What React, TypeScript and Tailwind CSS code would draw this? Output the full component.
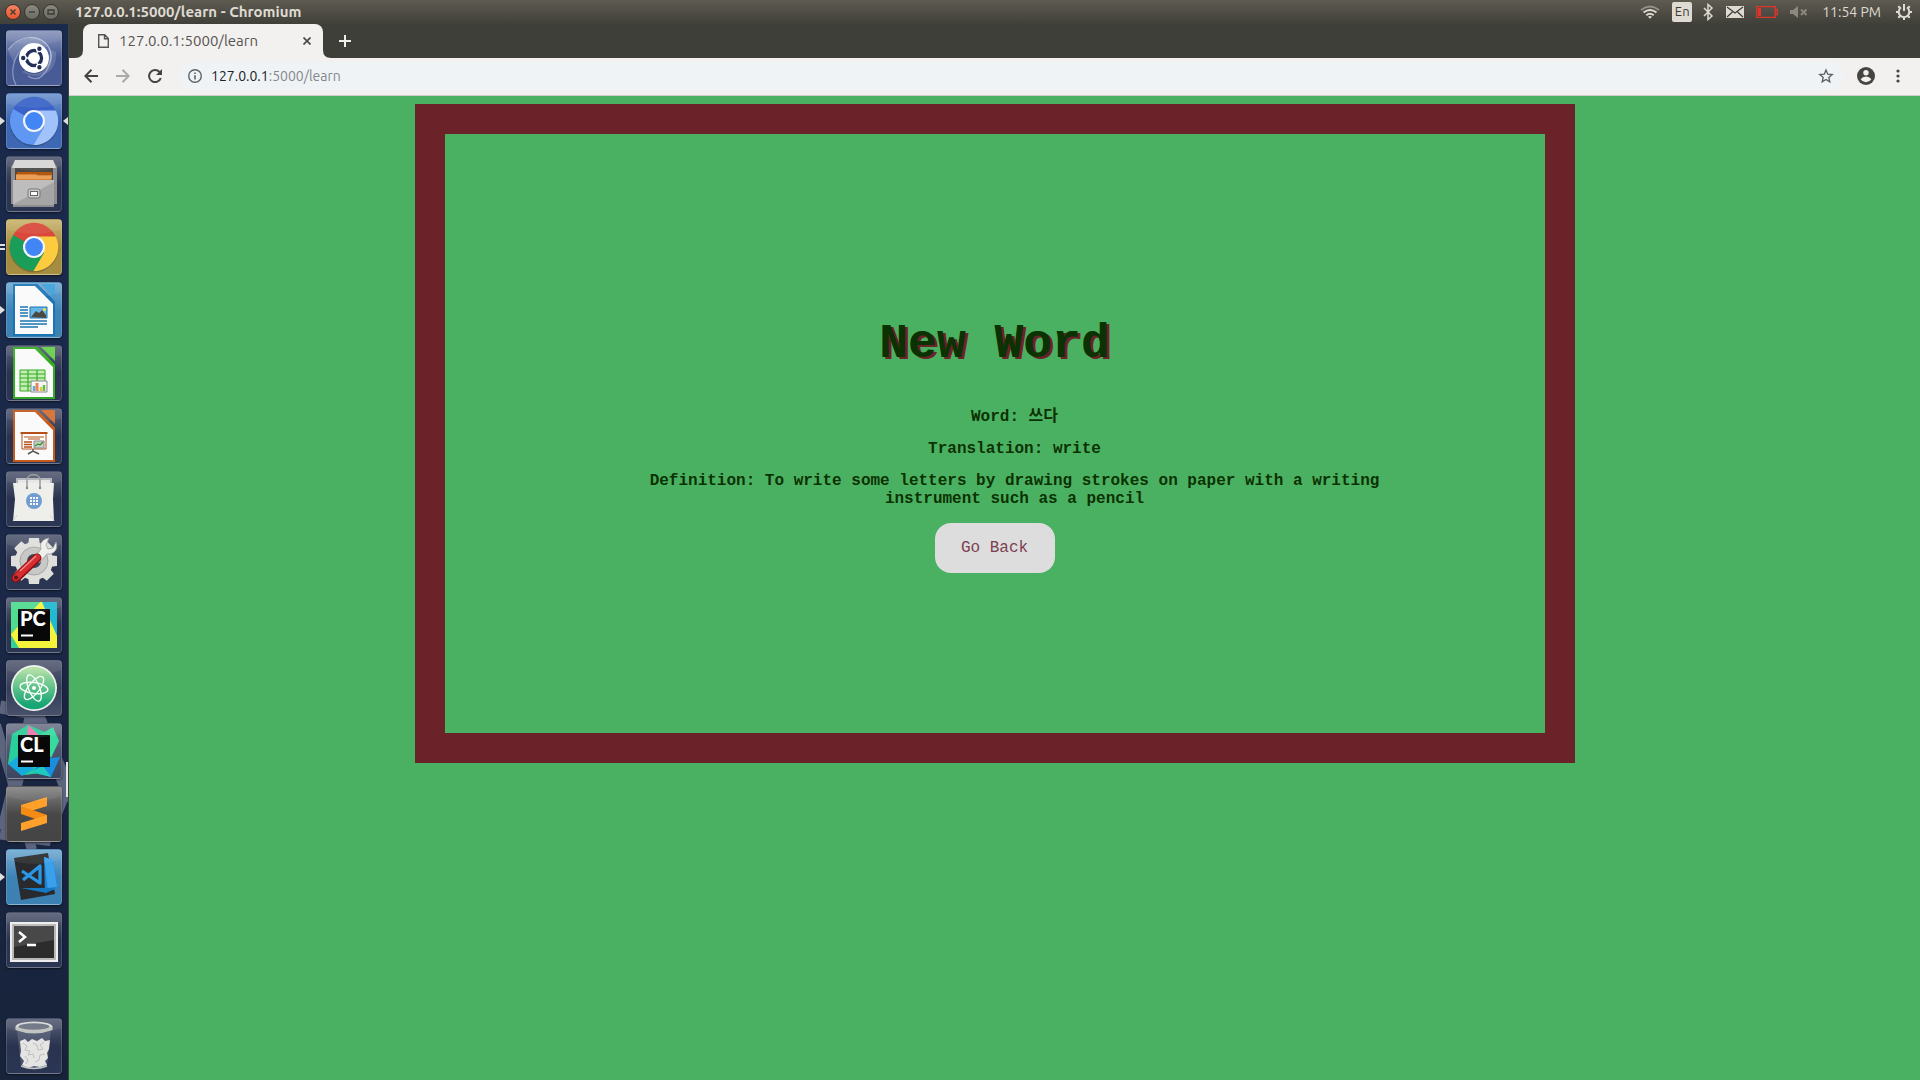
import React from "react";

type AppEntry = {
  name: string;
  tile: string;
  art: React.ReactNode;
  running?: "one" | "two";
  focused?: boolean;
};

const glass = "bg-linear-to-b from-[#5b6278] via-[#29334f] to-[#2b3654]";

function Ubuntu() {
  return (
    <>
      <g fill="none" stroke="#c3cbe8" strokeOpacity=".55" strokeWidth="1.2">
        <path d="M2 20C12 6 32 2 42 16c8 12 0 24-12 26" />
        <path d="M10 55C2 40 10 16 28 14" />
        <path d="M24 8c18-2 30 20 12 38-4 4-10 3-14 0" />
      </g>
      <path d="M2 20C12 6 32 2 42 16l-8 4C24 10 12 16 8 34Z" fill="#fff" opacity=".15" />
      <path d="M50 22c2 20-16 30-34 20l6-4c14 4 22-4 22-18Z" fill="#fff" opacity=".15" />
      <circle cx="28" cy="28.500" r="15.200" fill="#1e2c55" opacity=".5" />
      <circle cx="28" cy="28" r="15" fill="#fff" />
      <circle cx="28" cy="28" r="7.500" fill="none" stroke="#23305a" strokeWidth="3.400" />
      <g stroke="#fff" strokeWidth="1.400">
        <path d="M28 28H16M28 28l6-10.400M28 28l6 10.400" />
        <circle cx="17.200" cy="28" r="2.900" fill="#23305a" />
        <circle cx="33.400" cy="18.700" r="2.900" fill="#23305a" />
        <circle cx="33.400" cy="37.300" r="2.900" fill="#23305a" />
      </g>
      <circle cx="28" cy="28" r="5.600" fill="#fff" />
    </>
  );
}

function Browser({ top, left, right, hub }: { top: string; left: string; right: string; hub: string }) {
  return (
    <>
      <ellipse cx="28" cy="29" rx="24.500" ry="24.500" fill="#000" opacity=".2" />
      <path d="M6.600 17A24 24 0 0 1 49.400 17Q52 22 52 28L28 17 17.600 34Z" fill={top} />
      <path d="M7.200 16A24 24 0 0 0 28 52L38 34 28 28Z" fill={left} />
      <path d="M49.800 17.500A24 24 0 0 1 27.500 52L38 34 32 17.500Z" fill={right} />
      <circle cx="28" cy="28" r="11" fill="#f4f5f8" />
      <circle cx="28" cy="28" r="8.900" fill={hub} />
    </>
  );
}

function Drawer() {
  return (
    <>
      <path d="M9 4h38l4 7v37H5V11Z" fill="#8e8e8e" />
      <path d="M9 4h38l3 8H6Z" fill="#d6d6d6" />
      <path d="M9 12h38v16H9Z" fill="#4a4744" />
      <path d="M11 16h35v10H11Z" fill="#b3560f" />
      <path d="M10 18h20l2 2h13v8H10Z" fill="#dc7d2b" />
      <path d="M10 20h36M10 22h36" stroke="#fbd6a1" strokeWidth=".8" />
      <path d="M7 24h41v27H7Z" fill="#a5a5a5" />
      <path d="M7 24h41v2L8 48H7Z" fill="#bdbdbd" />
      <path d="M7 50h41" stroke="#777" />
      <rect x="22" y="33" width="12" height="9" rx="2" fill="#ccc" stroke="#777" />
      <rect x="24.500" y="35.500" width="7" height="4" fill="#fff" stroke="#666" />
    </>
  );
}

function Sheet({ color, light, children }: { color: string; light: string; children: React.ReactNode }) {
  return (
    <>
      <path d="M8 3h23l17 17v33H8Z" fill="#fafafa" stroke={color} strokeWidth="2" />
      <path d="m30 3 18 18" stroke={color} strokeWidth="3" />
      <path d="M35 2h14v14Z" fill={light} />
      {children}
    </>
  );
}

function Writer() {
  return (
    <Sheet color="#1b75b5" light="#3f9fd9">
      <path d="M14 25h8M14 28h8M14 31h8M14 34h8M14 39h27M14 42h27M14 45h18" stroke="#1b75b5" strokeWidth="1.700" />
      <path d="M24 25h17v11H24Z" fill="#67b6e7" stroke="#1b75b5" />
      <path d="m25 35 5-6 3 2 3-3 4 5v3Z" fill="#4a4a43" />
      <circle cx="38.500" cy="27.500" r="1.500" fill="#f3e23e" />
    </Sheet>
  );
}

function Calc() {
  return (
    <Sheet color="#32ad20" light="#65cf4b">
      <path d="M14 25h25v21H14Z" fill="#c4edb6" stroke="#32ad20" />
      <path d="M14 29h25M14 33h25M14 37h25M14 41h25M22 25v21M31 25v21" stroke="#32ad20" strokeWidth="1.200" />
      <path d="M25 36h16v11H25Z" fill="#f7f7f7" stroke="#8b8b8b" />
      <path d="M28 46v-5" stroke="#62a7d8" strokeWidth="2.500" />
      <path d="M31 46v-8" stroke="#e8855a" strokeWidth="3" />
      <path d="M35 46v-4" stroke="#e8c531" strokeWidth="2.500" />
      <path d="M38 46v-6" stroke="#60bd45" strokeWidth="2.500" />
    </Sheet>
  );
}

function Impress() {
  return (
    <Sheet color="#c45a1c" light="#d56d2d">
      <path d="M16 25h24v16H16Z" fill="#fff" stroke="#b6501b" />
      <path d="M14.500 25h27" stroke="#b6501b" strokeWidth="2" />
      <path d="M18 29h20M22 31h12" stroke="#b6501b" strokeWidth="1.200" />
      <path d="M18 34h8M18 36.500h8M18 39h8" stroke="#b6501b" strokeWidth="1.500" />
      <path d="M28 33h10v7H28Z" fill="#cecece" stroke="#888" />
      <path d="m29 38 3-2 2 1 3-3" fill="none" stroke="#259b21" strokeWidth="1.300" />
      <path d="m22 46 5-3 6 3M27 41v3" fill="none" stroke="#555" strokeWidth="1.500" />
    </Sheet>
  );
}

function Bag() {
  return (
    <>
      <path d="M10 7h36v6H10Z" fill="#aeb3b8" />
      <path d="M12 9h32v3H12Z" fill="#e6e6e3" />
      <path d="M7 12h41l-1 16 1 22H7l2-22Z" fill="#eeeeea" />
      <path d="m7 50 4-6M48 50l-4-6" fill="none" stroke="#d4d4cf" />
      <path d="M21 17V9c0-7 13-7 13 0v8" fill="none" stroke="#999" strokeWidth="1.600" />
      <circle cx="21" cy="17" r="1.200" fill="#888" />
      <circle cx="34" cy="17" r="1.200" fill="#888" />
      <circle cx="28" cy="30" r="8" fill="#709dd0" />
      <path d="M24 27h8M24 30h8M24 33h8" stroke="#fff" strokeWidth="2" strokeDasharray="2 1" />
    </>
  );
}

function Settings() {
  const teeth = [0, 45, 90, 135, 180, 225, 270, 315];
  return (
    <>
      <g fill="#dededb">
        {teeth.map((a) => (
          <path key={a} d="M22 12l1-8h10l1 8Z" transform={`rotate(${a} 28 27)`} />
        ))}
        <circle cx="28" cy="27" r="19" />
      </g>
      <circle cx="28" cy="27" r="14" fill="#c8c8c6" stroke="#a5a5a3" />
      <circle cx="28" cy="27" r="7" fill="#3b4259" />
      <path d="M28 24 35 15c-2-6 2-10 8-11l-3 7 2 4 5-1 3-6c3 8-3 13-9 12L33 29Z" fill="#eeeeeb" stroke="#999" strokeWidth=".8" />
      <path d="m31 24-21 20" stroke="#8c1014" strokeWidth="9" strokeLinecap="round" />
      <path d="m31 23.500-21 20" stroke="#d62e30" strokeWidth="6.500" strokeLinecap="round" />
      <path d="M30 22 14 37" stroke="#f18b87" strokeWidth="1.300" />
      <circle cx="10" cy="43.500" r="2" fill="#5b171c" />
    </>
  );
}

function Label({ text }: { text: string }) {
  return (
    <>
      <path d="M12 12h32v32H12Z" fill="#080808" />
      <path d="M15 38.500h12" stroke="#fff" strokeWidth="2.200" />
      <text x="14" y="29" fill="#fff" fontFamily="Lato, sans-serif" fontSize="20" fontWeight="900">
        {text}
      </text>
    </>
  );
}

function PyCharm() {
  return (
    <>
      <path d="M5 5h46v46H5Z" fill="#36d591" />
      <path d="M5 37 34 5h5l12 33v13H5Z" fill="#f5f43b" />
      <path d="M36 5h15v34Z" fill="#20b9cf" />
      <path d="M5 5h29L5 37Z" fill="#4fdc8e" />
      <path d="m5 38 8 13H5Z" fill="#38cf94" />
      <Label text="PC" />
    </>
  );
}

function Atom() {
  return (
    <>
      <circle cx="28" cy="28" r="23" fill="#f1f4ed" />
      <circle cx="28" cy="28" r="21.300" fill="url(#atomFill)" />
      <g fill="none" stroke="#f7fff8" strokeWidth="1.400">
        <ellipse cx="28" cy="28" rx="5.500" ry="14" transform="rotate(-22 28 28)" />
        <ellipse cx="28" cy="28" rx="5.500" ry="14" transform="rotate(38 28 28)" />
        <ellipse cx="28" cy="28" rx="14" ry="5.500" transform="rotate(8 28 28)" />
      </g>
      <circle cx="28" cy="28" r="2" fill="#fff" />
    </>
  );
}

function CLion() {
  return (
    <>
      <path d="m6 11 16-9 22 9-10 39-15 2L2 41Z" fill="#29cf9a" />
      <path d="m22 2 11 10H21Z" fill="#ec76ae" />
      <path d="m32 13 15-9 6 14-8 17Z" fill="#37dba0" />
      <path d="M38 36 54 34 45 54 27 48Z" fill="#168fe0" />
      <path d="m2 41 14-11 12 16-12 7Z" fill="#17aadc" />
      <path d="m24 49 13-6 8 11Z" fill="#20c9bd" />
      <Label text="CL" />
    </>
  );
}

function Sublime() {
  return (
    <>
      <path d="m15 19 26-8v9l-26 8Z" fill="#ffa02a" />
      <path d="m15 20 26 9v8l-26-9Z" fill="#f38b14" />
      <path d="m15 37 26-8v8l-26 8Z" fill="#ffa02a" />
    </>
  );
}

function Code() {
  return (
    <>
      <path d="m8 9 34-5 7 41-34 6Z" fill="#282a2d" />
      <path d="m38 8 9 3 5 28-13 5Z" fill="#1d85d7" />
      <path d="m38 8 9 3 4 27-9 3Z" fill="#3ba0ec" />
      <path d="m15 39 27 0 9-1-11 6Z" fill="#1678c2" />
      <path d="m16 22 18 12V17L17 31" fill="none" stroke="#2996e7" strokeWidth="3.300" strokeLinejoin="round" />
    </>
  );
}

function Terminal() {
  return (
    <>
      <path d="M4 10h48v40H4Z" fill="#eeeeec" />
      <path d="M6 12h44v36H6Z" fill="#b8b8b6" />
      <path d="M8 14h40v32H8Z" fill="#2c2c2c" />
      <path d="M8 14h40v14L8 35Z" fill="#484848" />
      <path d="m13 20 6 5-6 5" fill="none" stroke="#fff" strokeWidth="2.500" />
      <path d="M21 33h9" stroke="#fff" strokeWidth="2.300" />
    </>
  );
}

function Trash() {
  return (
    <>
      <path d="m11 12 4 36q13 5 26 0l4-36Z" fill="#8790a0" opacity=".35" />
      <path
        d="m14 23 5-2 3 3 4-3 5 2 5-3 3 3 5-1-1 9-2 4 1 5-3 3 2 4-7 2-6-1-6 2-6-3 2-4-4-5 1-5Z"
        fill="#e4e5e3"
      />
      <path
        d="m17 25 4 3-2 4 5 1-2 4 5-1 1 4M38 24l-4 3 3 4-5 1-1-5-4-2M39 36l-5 1-1 5-4 2M19 38l3 4-2 4"
        fill="none"
        stroke="#bcbfbd"
      />
      <ellipse cx="28" cy="9" rx="18.500" ry="5.500" fill="#d8d9d5" />
      <path d="M9.500 9h37v3q-18.500 7-37 0Z" fill="#bfc1bd" />
      <ellipse cx="28" cy="8.500" rx="15.500" ry="3.300" fill="#6c7280" />
      <path d="M15 48q13 5 26 0" fill="none" stroke="#c4c6c6" strokeWidth="1.500" />
    </>
  );
}

const apps: AppEntry[] = [
  { name: "Search your computer", tile: "bg-linear-to-b from-[#8c97bb] via-[#465a96] to-[#4a5c95]", art: <Ubuntu /> },
  {
    name: "Chromium",
    tile: "bg-linear-to-b from-[#7397d0] via-[#3d66b4] to-[#3f68b3]",
    art: <Browser top="#3a62c8" left="#5f97f3" right="#a1c2fa" hub="#4285f4" />,
    running: "one",
    focused: true,
  },
  { name: "Files", tile: glass, art: <Drawer /> },
  {
    name: "Google Chrome",
    tile: "bg-linear-to-b from-[#cbb673] via-[#a48c3c] to-[#a58d42]",
    art: <Browser top="#d9483b" left="#1a9d59" right="#fdcb3e" hub="#4285f4" />,
    running: "two",
  },
  {
    name: "LibreOffice Writer",
    tile: "bg-linear-to-b from-[#70abd3] via-[#3d84b9] to-[#3d80b2]",
    art: <Writer />,
    running: "one",
  },
  { name: "LibreOffice Calc", tile: glass, art: <Calc /> },
  { name: "LibreOffice Impress", tile: glass, art: <Impress /> },
  { name: "Ubuntu Software", tile: glass, art: <Bag /> },
  { name: "System Settings", tile: glass, art: <Settings /> },
  { name: "PyCharm", tile: glass, art: <PyCharm /> },
  { name: "Atom", tile: "bg-linear-to-b from-[#5b6278] via-[#333d58] to-[#48506a]", art: <Atom /> },
  { name: "CLion", tile: "bg-linear-to-b from-[#777c90] via-[#4d556e] to-[#3d4660]", art: <CLion /> },
  { name: "Sublime Text", tile: "bg-linear-to-b from-[#868686] via-[#484848] to-[#444444]", art: <Sublime /> },
  {
    name: "Visual Studio Code",
    tile: "bg-linear-to-b from-[#74acd3] via-[#3e83b6] to-[#3d80b2]",
    art: <Code />,
    running: "one",
  },
  { name: "Terminal", tile: glass, art: <Terminal /> },
];

function LauncherItem({ app }: { app: AppEntry }) {
  return (
    <div className="relative flex h-14 shrink-0 items-center">
      {app.running && (
        <svg className="absolute left-0 h-3 w-[5px]" viewBox="0 0 5 12" aria-hidden="true">
          {app.running === "one" ? (
            <path d="M0 2l5 4-5 4Z" fill="#dfdfdf" />
          ) : (
            <path d="M0 4h5M0 8h5" stroke="#dfdfdf" strokeWidth="2" />
          )}
        </svg>
      )}
      <button
        type="button"
        aria-label={app.name}
        className={`mx-1.5 size-14 overflow-hidden rounded border border-white/15 shadow-[0_1px_2px_#0008] ${app.tile}`}
      >
        <svg viewBox="1 1 54 54" className="size-full" aria-hidden="true">
          {app.art}
          <path d="M0 0h56v10Q28 20 0 10Z" fill="#fff" opacity=".07" />
        </svg>
      </button>
      {app.focused && (
        <svg className="absolute right-0 h-3 w-[5px]" viewBox="0 0 5 12" aria-hidden="true">
          <path d="M5 2 0 6l5 4Z" fill="#dfdfdf" />
        </svg>
      )}
    </div>
  );
}

function Wallpaper() {
  return (
    <svg
      className="absolute inset-x-0 top-[676px] h-40 w-full"
      viewBox="0 700 68 160"
      preserveAspectRatio="none"
      aria-hidden="true"
    >
      <g stroke="#5c647e" fill="none">
        <path d="M0 707 L28 712" strokeWidth="13" />
        <path d="M4 830 34 708 72 800" strokeWidth="14" />
        <path d="M-4 725 32 850" strokeWidth="10" />
        <path d="M0 834 46 840 72 775" strokeWidth="11" />
      </g>
      <path d="M67 762v35" stroke="#e4e4ea" strokeWidth="2" />
    </svg>
  );
}

function Launcher() {
  return (
    <nav
      aria-label="Launcher"
      className="relative flex w-[69px] shrink-0 flex-col border-r border-[#3f3f46] bg-linear-to-b from-[#1a2a4c] via-[#1b2848] to-[#17233a]"
    >
      <Wallpaper />
      <div className="relative flex flex-1 flex-col gap-[7px] py-1.5">
        {apps.map((app) => (
          <LauncherItem key={app.name} app={app} />
        ))}
        <div className="mt-auto">
          <LauncherItem app={{ name: "Trash", tile: glass, art: <Trash /> }} />
        </div>
      </div>
    </nav>
  );
}

function WindowButton({ label, close, d }: { label: string; close?: boolean; d: string }) {
  return (
    <button
      type="button"
      aria-label={label}
      className={`size-4 rounded-full border border-[#35342f] ${
        close ? "bg-linear-to-b from-[#f58562] to-[#e5542b]" : "bg-linear-to-b from-[#8b8a82] to-[#6b6a63]"
      }`}
    >
      <svg viewBox="0 0 14 14" className="size-full" fill="none" stroke="#3b3a35" strokeWidth="1.300" aria-hidden="true">
        <path d={d} />
      </svg>
    </button>
  );
}

function TopBar() {
  return (
    <header className="flex h-6 shrink-0 items-center justify-between bg-linear-to-b from-[#5e5b51] to-[#403f39] pr-[7px] pl-[5px] text-[#dfdbd2]">
      <div className="flex items-center">
        <div className="flex gap-[3px]">
          <WindowButton label="Close" close d="m4.500 4.500 5 5m0-5-5 5" />
          <WindowButton label="Minimize" d="M4 7h6" />
          <WindowButton label="Restore" d="M4 5h6v4H4Z" />
        </div>
        <h1 className="ml-4 text-[15px] leading-6 font-bold">127.0.0.1:5000/learn - Chromium</h1>
      </div>
      <div className="flex items-center">
        <svg viewBox="0 0 20 16" className="h-4 w-5" fill="none" stroke="currentColor" strokeWidth="1.800" aria-label="Wi-Fi">
          <path d="M1 6q9-7 18 0" opacity=".45" />
          <path d="M3.500 8.500q6.500-5 13 0M6.300 11.200q3.700-3 7.400 0" />
          <path d="m8 12.800 2 2 2-2q-2-1.500-4 0Z" fill="currentColor" stroke="none" />
        </svg>
        <span className="ml-3 flex h-5 w-5 items-center justify-center rounded-xs bg-[#dfdbd2] text-[13px] text-[#3c3b37]">En</span>
        <svg viewBox="0 0 12 18" className="ml-2.5 h-[18px] w-3" fill="none" stroke="currentColor" strokeWidth="1.500" aria-label="Bluetooth">
          <path d="m2 5 8 8-4 3.500v-15L10 5l-8 8" />
        </svg>
        <svg viewBox="0 0 18 12" className="ml-3 h-3 w-[18px]" aria-label="Messages">
          <path d="M0 0h18v12H0Z" fill="currentColor" />
          <path d="m1 1 8 6 8-6M1 11l5.500-5M17 11l-5.500-5" fill="none" stroke="#3c3b37" strokeWidth="1.200" />
        </svg>
        <svg viewBox="0 0 22 12" className="ml-3 h-3 w-[22px]" fill="none" stroke="#e0352b" strokeWidth="1.300" aria-label="Battery low">
          <path d="M.700.700h18.600v10.600H.700ZM19.500 3.500H21.300v5H19.500" />
          <path d="M2 2h3v8H2Z" fill="#e0352b" stroke="none" />
        </svg>
        <svg viewBox="0 0 18 12" className="ml-3 h-3 w-[18px]" fill="#8a887f" aria-label="Muted">
          <path d="M0 4h3l5-4v12L3 8H0Z" />
          <path d="m11 3.500 5.500 5.500m0-5.500L11 9" stroke="#8a887f" strokeWidth="2" />
        </svg>
        <time className="ml-3.5 text-[14px] leading-6">11:54 PM</time>
        <svg viewBox="0 0 18 18" className="ml-3.5 size-[18px]" fill="none" stroke="currentColor" aria-label="System menu">
          <path d="M6 4.500a5.300 5.300 0 1 0 6 0" strokeWidth="2" />
          <path d="M9 1v7" strokeWidth="2" />
          <path d="M1 9h3M14 9h3M3.300 3.300l2 2M14.700 3.300l-2 2M3.300 14.700l2-2M14.700 14.700l-2-2M9 14v3" strokeWidth="2" />
        </svg>
      </div>
    </header>
  );
}

function TabStrip() {
  return (
    <div className="flex h-[34px] items-stretch bg-[#3f3f39]">
      <div className="relative ml-3.5 flex w-60 items-center rounded-t-lg bg-[#f2f1f0] pr-3 pl-[15px] text-[#56544f]">
        <svg viewBox="0 0 8 8" className="absolute -left-2 bottom-0 size-2" fill="#f2f1f0" aria-hidden="true">
          <path d="M8 0v8H0q8 0 8-8Z" />
        </svg>
        <svg viewBox="0 0 8 8" className="absolute -right-2 bottom-0 size-2" fill="#f2f1f0" aria-hidden="true">
          <path d="M0 0v8h8Q0 8 0 0Z" />
        </svg>
        <svg viewBox="0 0 11 14" className="h-3.5 w-[11px]" fill="none" stroke="#56544f" strokeWidth="1.400" aria-hidden="true">
          <path d="M.700.700h6l3.600 3.800v8.800H.700ZM6.500.700v4h3.800" />
        </svg>
        <span className="ml-2.5 flex-1 text-[15px]">127.0.0.1:5000/learn</span>
        <button type="button" aria-label="Close tab">
          <svg viewBox="0 0 8 8" className="size-2" stroke="#4b4a46" strokeWidth="1.700" aria-hidden="true">
            <path d="m.500.500 7 7m0-7-7 7" />
          </svg>
        </button>
      </div>
      <button type="button" aria-label="New tab" className="ml-4">
        <svg viewBox="0 0 12 12" className="size-3" stroke="#efeee9" strokeWidth="2" aria-hidden="true">
          <path d="M6 0v12M0 6h12" />
        </svg>
      </button>
    </div>
  );
}

function Toolbar() {
  return (
    <div className="flex h-[38px] items-center border-b border-[#cfcecb] bg-[#f2f1f0] pr-5 pb-px pl-[15px]">
      <button type="button" aria-label="Back">
        <svg viewBox="0 0 14 14" className="size-3.5" fill="none" stroke="#454440" strokeWidth="2" aria-hidden="true">
          <path d="M14 7H1.500M7.500.700 1.400 7l6.100 6.300" />
        </svg>
      </button>
      <button type="button" aria-label="Forward" className="ml-[18px]">
        <svg viewBox="0 0 14 14" className="size-3.5" fill="none" stroke="#aaa9a6" strokeWidth="2" aria-hidden="true">
          <path d="M0 7h12.500M6.500.700 12.600 7l-6.100 6.300" />
        </svg>
      </button>
      <button type="button" aria-label="Reload" className="ml-[18px]">
        <svg viewBox="0 0 14 14" className="size-3.5" fill="none" stroke="#454440" strokeWidth="2" aria-hidden="true">
          <path d="M12.800 9A6 6 0 1 1 11.500 3l1 1.200" />
          <path d="M14 0v6H8Z" fill="#454440" stroke="none" />
        </svg>
      </button>
      <div className="ml-4 flex h-7 flex-1 items-center rounded-full bg-[#eff3f5] pr-[9px] pl-[10px]">
        <svg viewBox="0 0 14 14" className="size-3.5 shrink-0" fill="none" stroke="#5f6368" strokeWidth="1.400" aria-hidden="true">
          <circle cx="7" cy="7" r="6.300" />
          <path d="M7 6.200V10.500M7 3.500v1.500" strokeWidth="1.600" />
        </svg>
        <a href="#learn" className="ml-[9px] flex-1 text-[14px] text-[#83878b]">
          <span className="text-[#202124]">127.0.0.1</span>:5000/learn
        </a>
        <button type="button" aria-label="Bookmark this page">
          <svg viewBox="0 0 24 24" className="size-4" fill="none" stroke="#5a5e62" strokeWidth="2" aria-hidden="true">
            <path d="m12 3 2.600 6.200 6.700.600-5.100 4.400 1.500 6.500L12 17.300l-5.700 3.400 1.500-6.500L2.700 9.800l6.700-.600Z" />
          </svg>
        </button>
      </div>
      <button type="button" aria-label="Profile" className="ml-3.5">
        <svg viewBox="0 0 18 18" className="size-[18px]" aria-hidden="true">
          <circle cx="9" cy="9" r="9" fill="#454440" />
          <circle cx="9" cy="5.800" r="2.700" fill="#f2f1f0" />
          <path d="M3.600 12.200q1.900-2.600 5.400-2.600t5.400 2.600A6.500 6.500 0 0 1 9 15.200a6.500 6.500 0 0 1-5.400-3Z" fill="#f2f1f0" />
        </svg>
      </button>
      <button type="button" aria-label="Menu" className="ml-[21px]">
        <svg viewBox="0 0 4 14" className="h-3.5 w-1" fill="#454440" aria-hidden="true">
          <circle cx="2" cy="2" r="1.600" />
          <circle cx="2" cy="7" r="1.600" />
          <circle cx="2" cy="12" r="1.600" />
        </svg>
      </button>
    </div>
  );
}

function LearnPage() {
  return (
    <main className="flex-1 bg-[#4bb162] p-2 font-['Courier_New','Liberation_Mono','Noto_Sans_CJK_KR',monospace] text-[#0b3202]">
      <section className="mx-auto flex min-h-[659px] max-w-[1160px] flex-col items-center border-[30px] border-[#6c2229] pt-[182px] text-center">
        <h2 className="text-[48px] leading-[56px] font-bold [text-shadow:3px_2px_#6c2229]">New Word</h2>
        <ul className="mt-9 flex max-w-[800px] flex-col gap-3.5 pl-10 text-[16px] leading-[18px] font-bold">
          <li>
            Word: <span lang="ko">쓰다</span>
          </li>
          <li>Translation: write</li>
          <li>Definition: To write some letters by drawing strokes on paper with a writing instrument such as a pencil</li>
        </ul>
        <button type="button" className="mt-[15px] h-[50px] w-[120px] rounded-2xl bg-[#dddddd] text-[16px] text-[#7c3f50]">
          Go Back
        </button>
      </section>
    </main>
  );
}

export default function App() {
  return (
    <div className="flex min-h-screen flex-col font-['Ubuntu','Noto_Sans',sans-serif]">
      <svg className="absolute size-0" aria-hidden="true">
        <linearGradient id="atomFill" x2="0" y2="1">
          <stop stopColor="#b9e3a7" />
          <stop offset=".9" stopColor="#16a574" />
        </linearGradient>
      </svg>
      <TopBar />
      <div className="flex flex-1">
        <Launcher />
        <div className="flex min-w-0 flex-1 flex-col">
          <TabStrip />
          <Toolbar />
          <LearnPage />
        </div>
      </div>
    </div>
  );
}
